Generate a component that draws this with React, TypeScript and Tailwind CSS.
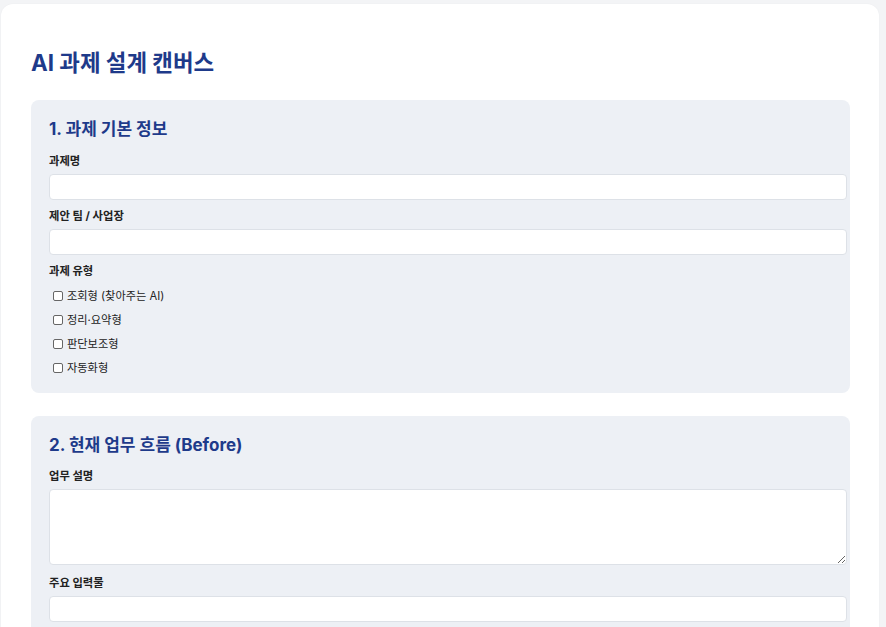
export default function App() {
  const types = ['조회형 (찾아주는 AI)', '정리·요약형', '판단보조형', '자동화형']

  const label = 'block text-[11.3px] leading-[16px] font-bold text-[#222] mb-[5px]'
  const input =
    'block w-[798px] h-[26px] bg-white border border-[#dde1e7] rounded-[4px] px-2 text-[12px] outline-none'

  return (
    <div
      className="min-h-screen bg-[#f3f4f6] pt-1 pl-px pr-[7px] text-[#222]"
      style={{ fontFamily: 'Inter, "Noto Sans CJK KR", "Noto Sans", sans-serif' }}
    >
      <div className="bg-white rounded-xl pl-[30px] pr-[29px] pt-[44px] pb-10 shadow-[0_0_2px_rgba(0,0,0,0.04)]">
        <h1 className="text-[22.4px] leading-[30px] font-bold text-[#1e3a8a] mb-[22px]">AI 과제 설계 캔버스</h1>

        {/* 1. 기본 정보 */}
        <section className="bg-[#edf0f5] rounded-lg pt-[18px] px-[18px] pb-[13px] mb-[23px]">
          <h2 className="text-[17px] leading-[22px] font-bold text-[#1e3a8a] mb-[13px]">1. 과제 기본 정보</h2>

          <label className={label}>과제명</label>
          <input className={input} />

          <label className={label + ' mt-2'}>제안 팀 / 사업장</label>
          <input className={input} />

          <label className={label + ' mt-2 mb-1'}>과제 유형</label>
          <div className="flex flex-col">
            {types.map((t) => (
              <div key={t} className="flex items-center h-6 text-[11.2px]">
                <span className="inline-block w-[10px] h-[10px] border border-[#666] rounded-[2px] bg-white ml-1 mr-1" />
                <span>{t}</span>
              </div>
            ))}
          </div>
        </section>

        {/* 2. Before */}
        <section className="bg-[#edf0f5] rounded-lg pt-[18px] px-[18px] pb-[18px]">
          <h2 className="text-[17px] leading-[22px] font-bold text-[#1e3a8a] mb-[12px]">2. 현재 업무 흐름 (Before)</h2>

          <label className={label}>업무 설명</label>
          <textarea className="block w-[798px] h-[76px] bg-white border border-[#dde1e7] rounded-[4px] px-2 py-1 text-[12px] outline-none" />

          <label className={label + ' mt-[10px]'}>주요 입력물</label>
          <input className={input} />
        </section>
      </div>
    </div>
  )
}
